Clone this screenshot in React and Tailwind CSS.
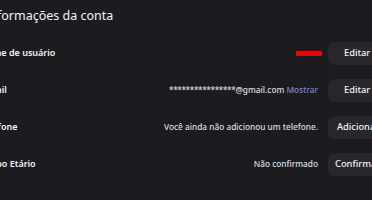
const rows = [
  { label: "Nome de usuário", value: "redacted", button: "Editar", pad: "pl-[16px]" },
  { label: "E-mail", value: "email", button: "Editar", pad: "pl-[16px]" },
  { label: "Telefone", value: "Você ainda não adicionou um telefone.", button: "Adicionar", pad: "pl-[9px]" },
  { label: "Grupo Etário", value: "Não confirmado", button: "Confirmar", pad: "pl-[7px]" },
];

function Value({ row }) {
  if (row.value === "redacted") {
    return <div className="w-[26px] h-[5px] mr-[-4px] bg-[#e5080b] rounded-[1px]" />;
  }
  if (row.value === "email") {
    return (
      <span className="text-[8.3px] font-medium text-[#dbdee1]">
        <span className="tracking-[-0.4px]">****************</span>@gmail.com{" "}
        <span className="text-[#7a84d0]">Mostrar</span>
      </span>
    );
  }
  return <span className="text-[8.3px] font-medium text-[#dbdee1]">{row.value}</span>;
}

export default function App() {
  return (
    <div
      className="w-[372px] h-[200px] overflow-hidden bg-[#1c1c20]"
      style={{ fontFamily: '"Noto Sans", "Open Sans", sans-serif' }}
    >
      <div className="ml-[-20px] w-[436px]">
        <h2 className="ml-[5px] text-[12.5px] text-[#f2f3f5] leading-none pt-[10px] h-[34px]">
          Informações da conta
        </h2>
        <div className="flex flex-col">
          {rows.map((row) => (
            <div key={row.label} className="flex items-center h-[37px] pt-[1px]">
              <span className="flex-1 text-[9px] font-semibold text-[#f2f3f5]">
                {row.label}
              </span>
              <Value row={row} />
              <button
                className={`ml-[10px] w-[88px] h-[23px] rounded-[7px] bg-[#27272c] text-[9.3px] font-medium text-[#f2f3f5] text-left ${row.pad}`}
              >
                {row.button}
              </button>
            </div>
          ))}
        </div>
      </div>
    </div>
  );
}
